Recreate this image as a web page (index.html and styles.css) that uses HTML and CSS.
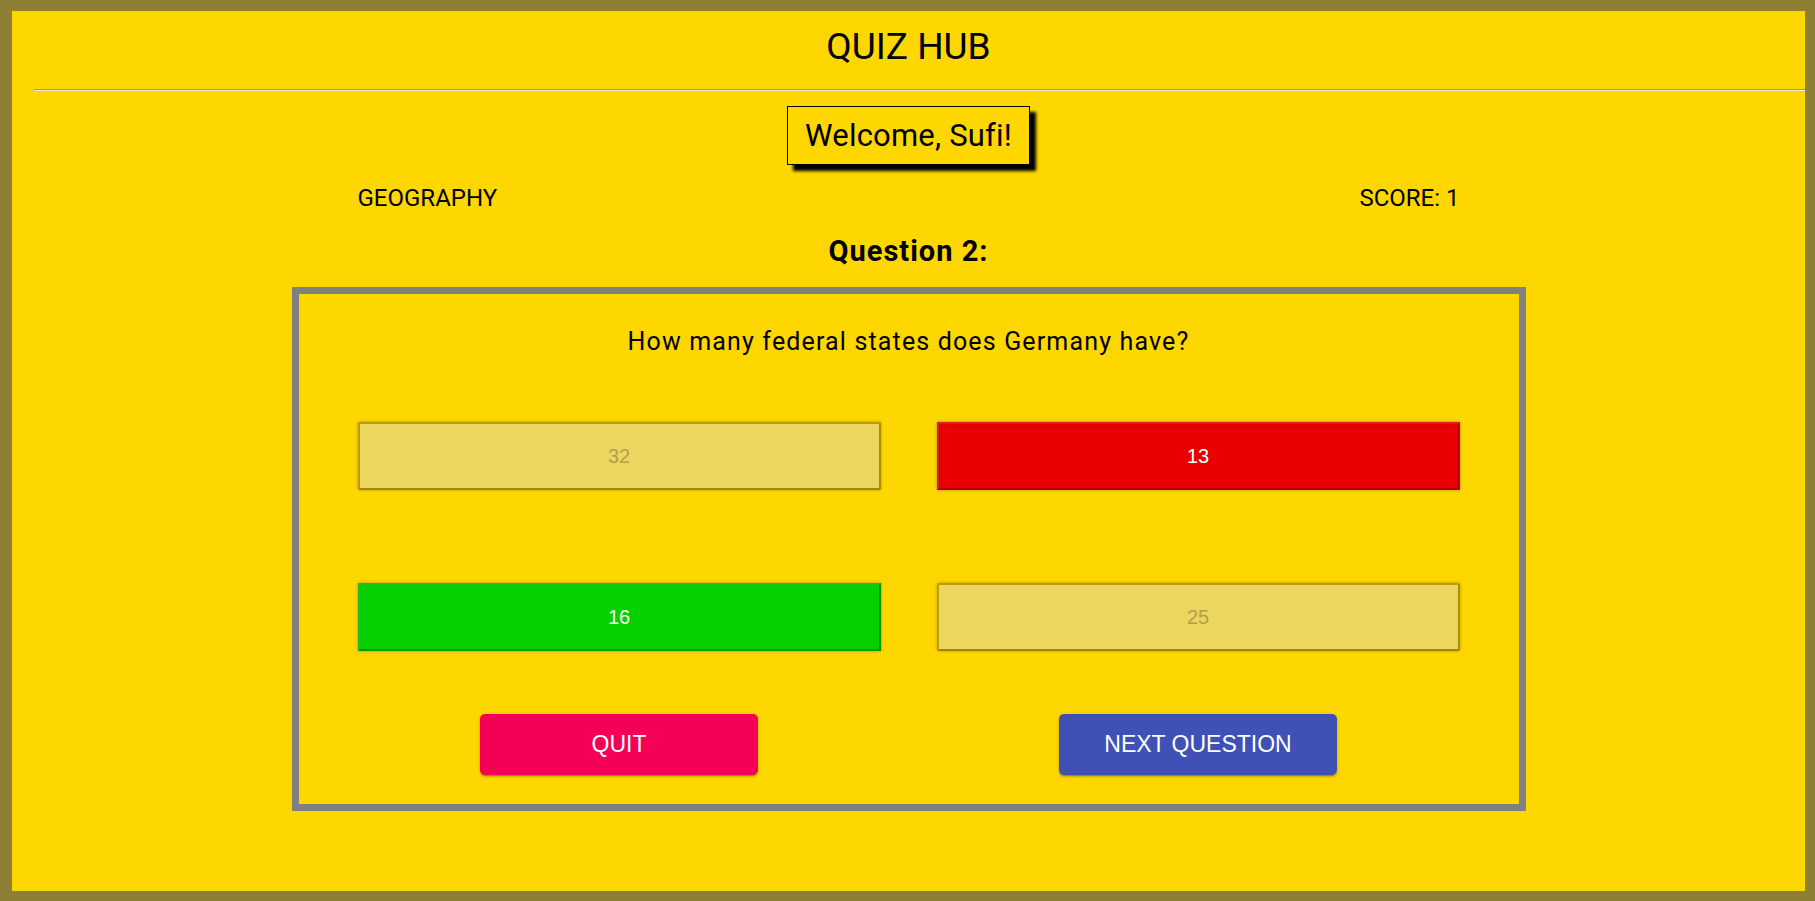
FILE: index.html
```html
<!DOCTYPE html>
<html lang="en">
<head>
<meta charset="utf-8">
<title>Quiz Hub</title>
<link rel="stylesheet" href="styles.css">
</head>
<body>
<header class="top">
  <h1 class="title">QUIZ HUB</h1>
</header>
<hr class="rule">
<main class="quiz">
  <div class="welcome-wrap"><p class="welcome">Welcome, Sufi!</p></div>
  <div class="meta">
    <span class="category">GEOGRAPHY</span>
    <span class="score">SCORE: 1</span>
  </div>
  <h2 class="qnum">Question 2:</h2>
  <section class="card">
    <p class="question">How many federal states does Germany have?</p>
    <div class="answers">
      <button class="answer muted">32</button>
      <button class="answer wrong">13</button>
      <button class="answer right">16</button>
      <button class="answer muted">25</button>
    </div>
    <div class="nav">
      <button class="btn quit">QUIT</button>
      <button class="btn next">NEXT QUESTION</button>
    </div>
  </section>
</main>
</body>
</html>
```
FILE: styles.css
```css
* { box-sizing: border-box; }

html { background: #8d7f34; }

body {
  margin: 0;
  height: 901px;
  background: #ffd700;
  border-style: solid;
  border-color: #8d7f34;
  border-width: 11px 10px 10px 12px;
  font-family: Roboto, "Open Sans", sans-serif;
  color: #000;
}

.top { padding-top: 17px; }

.title {
  margin: 0;
  text-align: center;
  font-size: 37px;
  line-height: 37px;
  font-weight: 400;
}

.rule {
  margin: 24px -6px 0 22px;
}

.quiz { display: flex; flex-direction: column; align-items: center; }

.welcome-wrap { margin-top: 15px; }

.welcome {
  margin: 0;
  border: 1px solid #000;
  padding: 10px 17px;
  font-size: 31px;
  line-height: 37px;
  letter-spacing: 0.2px;
  box-shadow: 6px 6px 3px #000;
}

.meta {
  width: 1102px;
  margin-top: 19px;
  display: flex;
  justify-content: space-between;
  font-size: 24px;
  line-height: 28px;
}

.qnum {
  margin: 22px 0 0;
  font-size: 29px;
  line-height: 34px;
  font-weight: 700;
  letter-spacing: 1px;
}

.card {
  width: 1234px;
  height: 524px;
  margin-top: 19px;
  border: 7px solid #808080;
  padding: 34px 59px 0;
}

.question {
  margin: 0;
  text-align: center;
  font-size: 25px;
  line-height: 28px;
  letter-spacing: 1.15px;
}

.answers {
  margin-top: 66px;
  display: grid;
  grid-template-columns: 523px 523px;
  column-gap: 56px;
  row-gap: 93px;
}

.answer {
  height: 68px;
  font-family: "Liberation Sans", Arial, sans-serif;
  font-size: 20px;
  border: 2px solid;
  padding: 0;
  box-shadow: 0 0 3px rgba(80, 60, 0, 0.45);
}

.muted {
  background: #ecd65f;
  color: #b3a04d;
  border-color: #b9a000 #a89000 #a08800 #b9a000;
  border-radius: 2px;
}

.wrong {
  background: #e80000;
  color: #fff;
  border-color: #d42222 #b00000 #b00000 #d42222;
}

.right {
  background: #06d000;
  color: #fff;
  border-color: #22bb22 #089600 #089600 #22bb22;
}

.nav {
  margin-top: 63px;
  display: grid;
  grid-template-columns: 523px 523px;
  column-gap: 56px;
  justify-items: center;
}

.btn {
  width: 278px;
  height: 61px;
  border: 0;
  border-radius: 5px;
  color: #fff;
  font-family: "Liberation Sans", Arial, sans-serif;
  font-size: 23px;
  box-shadow: 0 3px 1px -2px rgba(0,0,0,.2), 0 2px 2px 0 rgba(0,0,0,.14), 0 1px 5px 0 rgba(0,0,0,.12);
}

.quit { background: #f50057; }
.next { background: #3f51b5; }
```
